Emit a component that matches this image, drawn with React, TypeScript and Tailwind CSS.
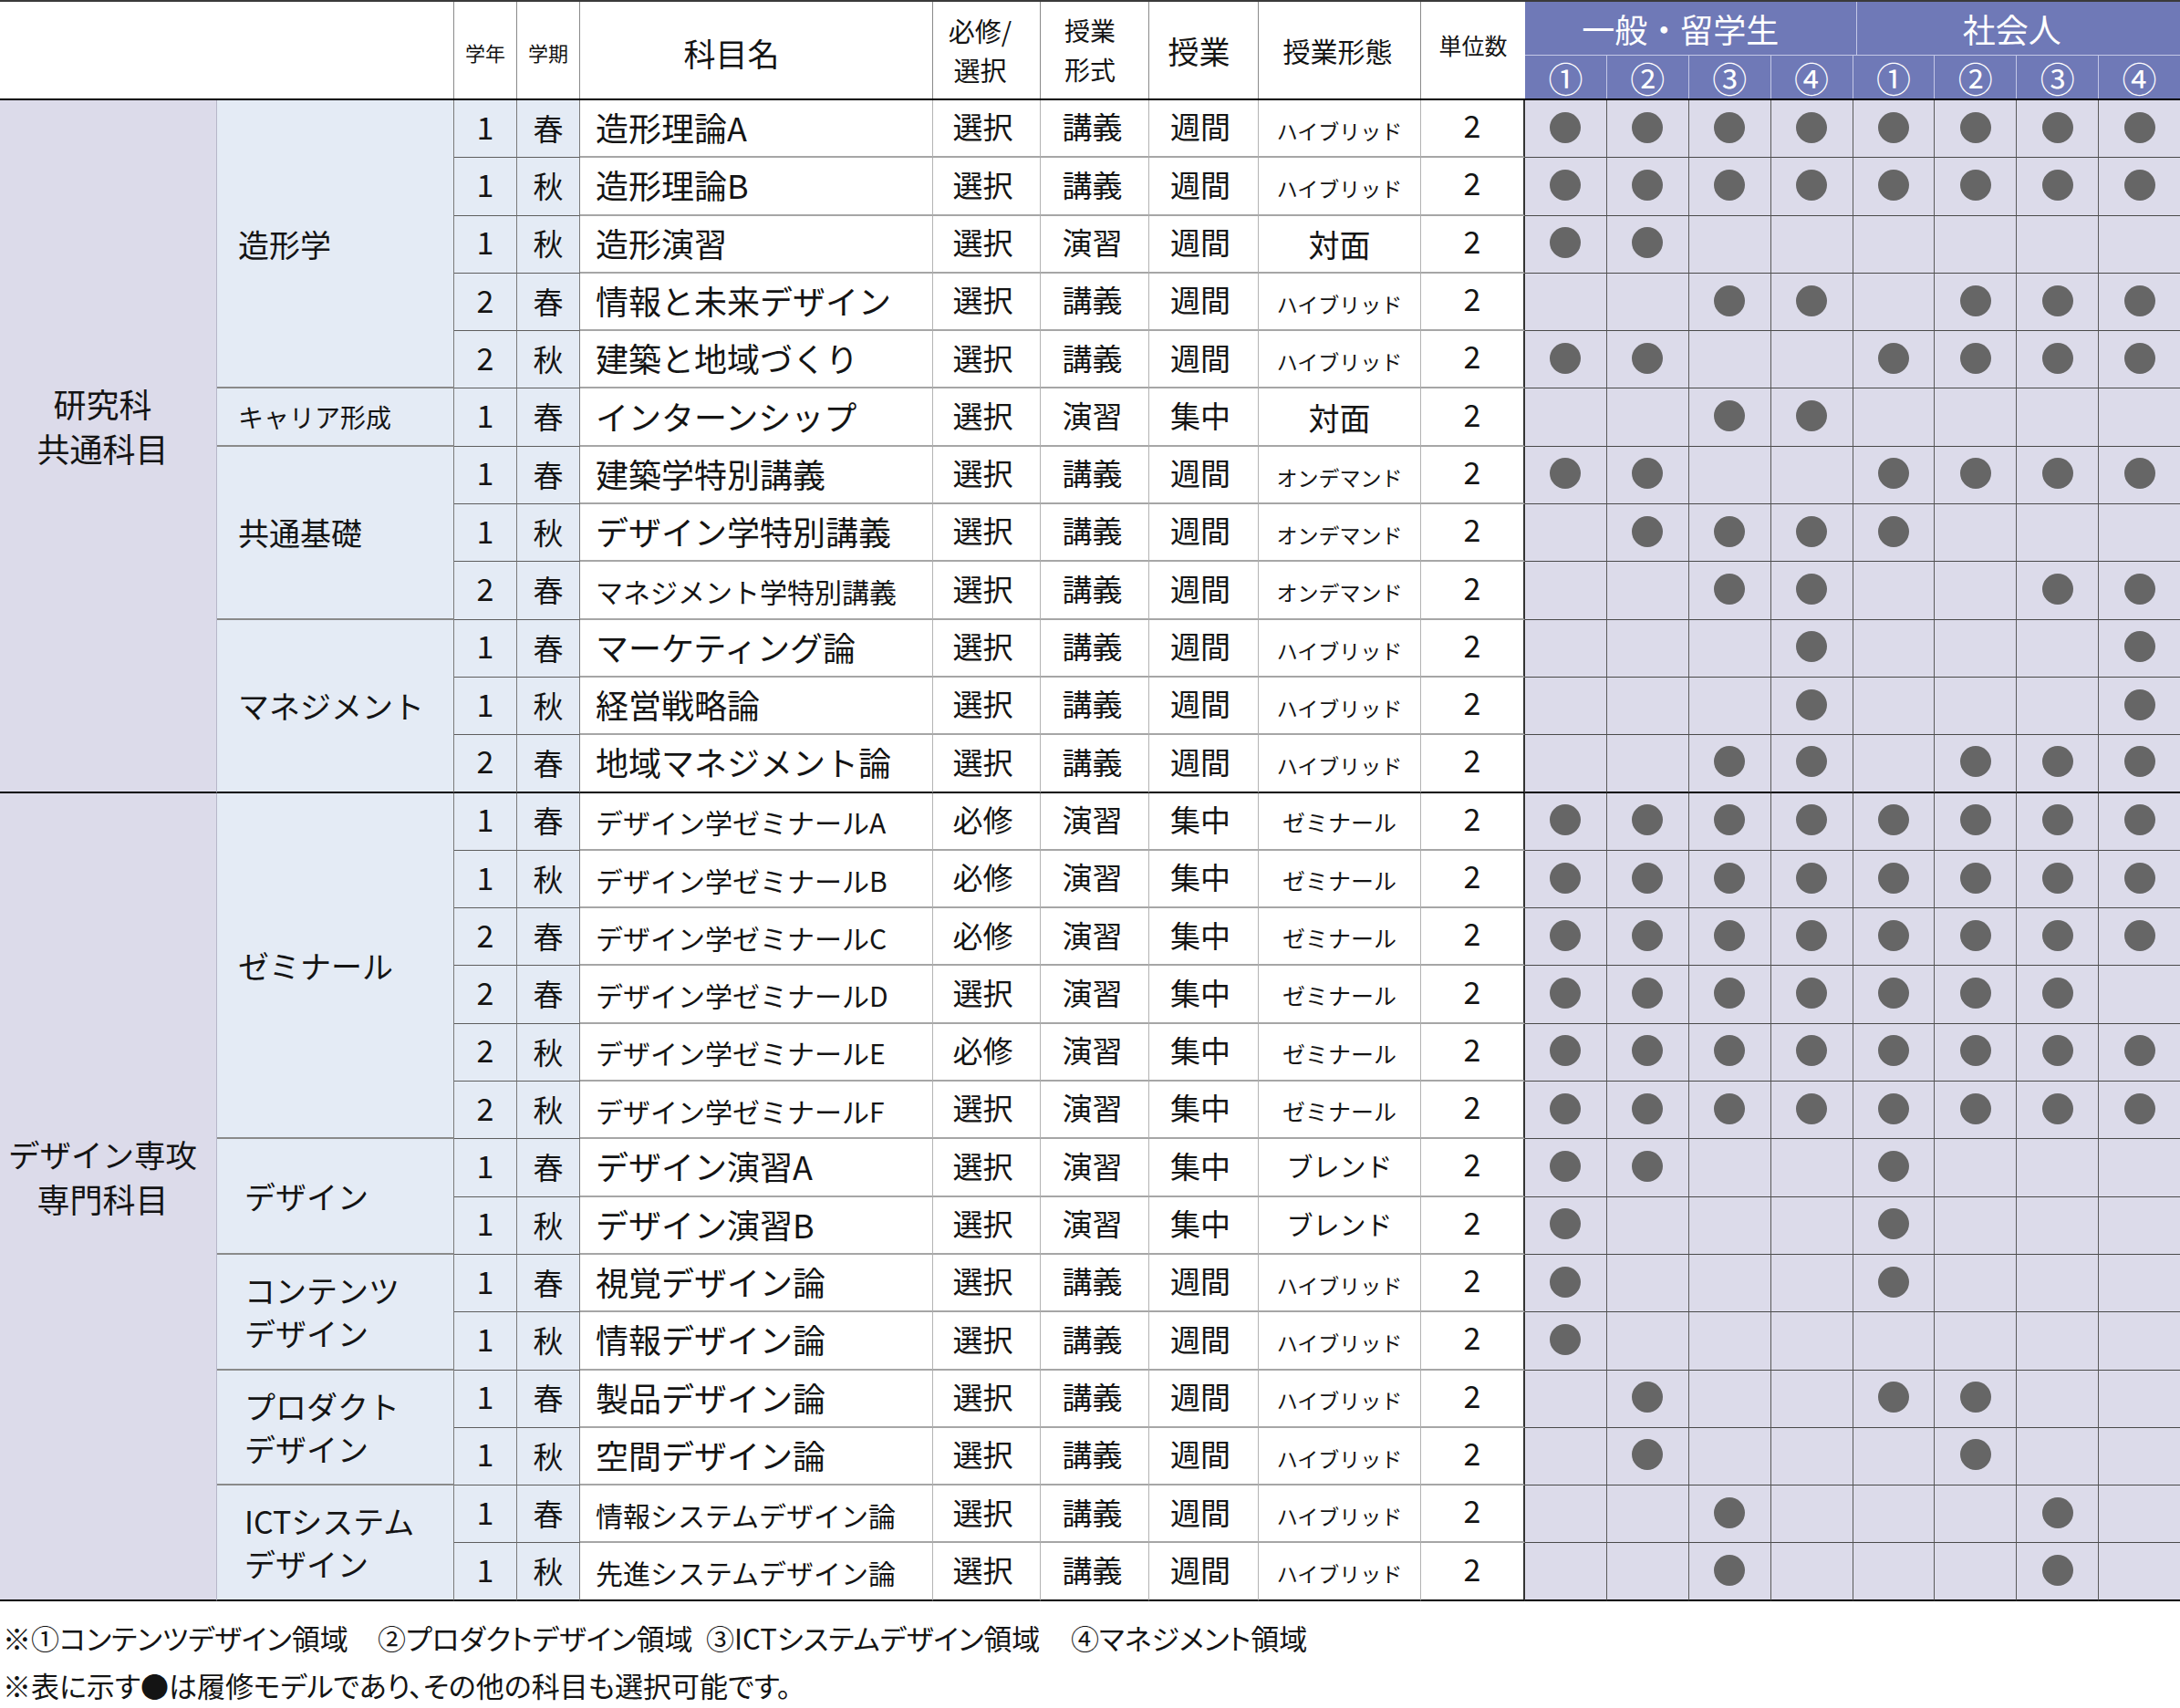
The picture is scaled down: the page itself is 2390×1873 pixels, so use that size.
type Row = {
  y: string
  t: string
  name: string
  small?: boolean
  req: string
  kind: string
  sched: string
  mode: string
  dots: string
}

type Group = { label: string[]; small?: boolean; wide?: boolean; rows: Row[] }
type Section = { label: string[]; groups: Group[] }

const r = (
  y: string,
  t: string,
  name: string,
  req: string,
  kind: string,
  sched: string,
  mode: string,
  dots: string,
  small = false,
): Row => ({ y, t, name, req, kind, sched, mode, dots, small })

const sections: Section[] = [
  {
    label: ['研究科', '共通科目'],
    groups: [
      {
        label: ['造形学'],
        rows: [
          r('1', '春', '造形理論A', '選択', '講義', '週間', 'ハイブリッド', '11111111'),
          r('1', '秋', '造形理論B', '選択', '講義', '週間', 'ハイブリッド', '11111111'),
          r('1', '秋', '造形演習', '選択', '演習', '週間', '対面', '11000000'),
          r('2', '春', '情報と未来デザイン', '選択', '講義', '週間', 'ハイブリッド', '00110111'),
          r('2', '秋', '建築と地域づくり', '選択', '講義', '週間', 'ハイブリッド', '11001111'),
        ],
      },
      {
        label: ['キャリア形成'],
        small: true,
        rows: [r('1', '春', 'インターンシップ', '選択', '演習', '集中', '対面', '00110000')],
      },
      {
        label: ['共通基礎'],
        rows: [
          r('1', '春', '建築学特別講義', '選択', '講義', '週間', 'オンデマンド', '11001111'),
          r('1', '秋', 'デザイン学特別講義', '選択', '講義', '週間', 'オンデマンド', '01111000'),
          r('2', '春', 'マネジメント学特別講義', '選択', '講義', '週間', 'オンデマンド', '00110011', true),
        ],
      },
      {
        label: ['マネジメント'],
        rows: [
          r('1', '春', 'マーケティング論', '選択', '講義', '週間', 'ハイブリッド', '00010001'),
          r('1', '秋', '経営戦略論', '選択', '講義', '週間', 'ハイブリッド', '00010001'),
          r('2', '春', '地域マネジメント論', '選択', '講義', '週間', 'ハイブリッド', '00110111'),
        ],
      },
    ],
  },
  {
    label: ['デザイン専攻', '専門科目'],
    groups: [
      {
        label: ['ゼミナール'],
        rows: [
          r('1', '春', 'デザイン学ゼミナールA', '必修', '演習', '集中', 'ゼミナール', '11111111', true),
          r('1', '秋', 'デザイン学ゼミナールB', '必修', '演習', '集中', 'ゼミナール', '11111111', true),
          r('2', '春', 'デザイン学ゼミナールC', '必修', '演習', '集中', 'ゼミナール', '11111111', true),
          r('2', '春', 'デザイン学ゼミナールD', '選択', '演習', '集中', 'ゼミナール', '11111110', true),
          r('2', '秋', 'デザイン学ゼミナールE', '必修', '演習', '集中', 'ゼミナール', '11111111', true),
          r('2', '秋', 'デザイン学ゼミナールF', '選択', '演習', '集中', 'ゼミナール', '11111111', true),
        ],
      },
      {
        label: ['デザイン'],
        wide: true,
        rows: [
          r('1', '春', 'デザイン演習A', '選択', '演習', '集中', 'ブレンド', '11001000'),
          r('1', '秋', 'デザイン演習B', '選択', '演習', '集中', 'ブレンド', '10001000'),
        ],
      },
      {
        label: ['コンテンツ', 'デザイン'],
        wide: true,
        rows: [
          r('1', '春', '視覚デザイン論', '選択', '講義', '週間', 'ハイブリッド', '10001000'),
          r('1', '秋', '情報デザイン論', '選択', '講義', '週間', 'ハイブリッド', '10000000'),
        ],
      },
      {
        label: ['プロダクト', 'デザイン'],
        wide: true,
        rows: [
          r('1', '春', '製品デザイン論', '選択', '講義', '週間', 'ハイブリッド', '01001100'),
          r('1', '秋', '空間デザイン論', '選択', '講義', '週間', 'ハイブリッド', '01000100'),
        ],
      },
      {
        label: ['ICTシステム', 'デザイン'],
        wide: true,
        rows: [
          r('1', '春', '情報システムデザイン論', '選択', '講義', '週間', 'ハイブリッド', '00100010', true),
          r('1', '秋', '先進システムデザイン論', '選択', '講義', '週間', 'ハイブリッド', '00100010', true),
        ],
      },
    ],
  },
]

const modeClass: Record<string, string> = {
  ハイブリッド: 'text-[23px] pt-[5px]',
  オンデマンド: 'text-[23px] pt-[5px]',
  対面: 'text-[34px]',
  ゼミナール: 'text-[25px] pt-[4px]',
  ブレンド: 'text-[29px] pb-[2px]',
}

function DataRow({ row, end }: { row: Row; end: boolean }) {
  // bottom lines: section end is a black rule across everything
  const white = end ? 'border-b-2 border-b-black' : 'border-b-2 border-b-[#a6a6a6]'
  const blue = end ? 'border-b-2 border-b-black' : 'border-b border-b-[#5e5e5e]'
  const dot = end ? 'border-b-2 border-b-black' : 'border-b border-b-[#4a4a4a]'
  return (
    <div className="flex h-[63.3px]">
      <div className={`flex w-[69px] items-center justify-center border-r border-r-[#7a7a7a] bg-[#e4ebf5] pb-[6px] text-[34px] ${blue}`}>{row.y}</div>
      <div className={`flex w-[69px] items-center justify-center border-r border-r-[#7a7a7a] bg-[#e4ebf5] pb-[1px] text-[33px] ${blue}`}>{row.t}</div>
      <div className={`flex w-[387px] items-center border-r border-r-[#b3b3b3] pl-[17px] ${row.small ? 'pt-[3px] text-[30px]' : 'pb-[3px] text-[36px]'} ${white}`}>
        {row.name}
      </div>
      <div className={`flex w-[118px] items-center justify-center border-r border-r-[#b3b3b3] pb-[3px] pr-[8px] text-[33px] ${white}`}>{row.req}</div>
      <div className={`flex w-[119px] items-center justify-center border-r border-r-[#b3b3b3] pb-[3px] pr-[5px] text-[33px] ${white}`}>{row.kind}</div>
      <div className={`flex w-[120px] items-center justify-center border-r border-r-[#b3b3b3] pb-[3px] pr-[7px] text-[33px] ${white}`}>{row.sched}</div>
      <div className={`flex w-[178px] items-center justify-center border-r border-r-[#b3b3b3] ${modeClass[row.mode]} ${white}`}>{row.mode}</div>
      <div className={`flex w-[114px] items-center justify-center border-r-2 border-r-[#333] pb-[8px] text-[34px] ${white}`}>2</div>
      <div className="flex flex-1">
        {row.dots.split('').map((d, i) => (
          <div
            key={i}
            className={`flex flex-1 items-center justify-center bg-[#dcdbea] pb-[3px] ${i < 7 ? 'border-r border-r-[#5a5a5a]' : ''} ${dot}`}
          >
            {d === '1' && <span className="block h-[34px] w-[34px] rounded-full bg-[#666666]" />}
          </div>
        ))}
      </div>
    </div>
  )
}

function Header() {
  const circ = ['①', '②', '③', '④', '①', '②', '③', '④']
  return (
    <div className="flex h-[110px] border-t-2 border-b-2 border-t-[#3a3a3a] border-b-black">
      <div className="w-[498px] border-r border-r-[#8a8a8a]" />
      <div className="flex w-[69px] items-center justify-center border-r border-r-[#8a8a8a] pt-[4px] text-[22px]">学年</div>
      <div className="flex w-[69px] items-center justify-center border-r border-r-[#8a8a8a] pt-[4px] text-[22px]">学期</div>
      <div className="flex w-[387px] items-center justify-center border-r border-r-[#8a8a8a] pr-[54px] pt-[6px] text-[35px]">科目名</div>
      <div className="flex w-[118px] flex-col items-center justify-center border-r border-r-[#8a8a8a] pr-[14px] text-[29px] leading-[43px]">
        <span>必修/</span>
        <span>選択</span>
      </div>
      <div className="flex w-[119px] flex-col items-center justify-center border-r border-r-[#8a8a8a] pr-[10px] text-[28px] leading-[43px]">
        <span>授業</span>
        <span>形式</span>
      </div>
      <div className="flex w-[120px] items-center justify-center border-r border-r-[#8a8a8a] pr-[10px] text-[34px]">授業</div>
      <div className="flex w-[178px] items-center justify-center border-r border-r-[#8a8a8a] pr-[4px] text-[30px]">授業形態</div>
      <div className="flex w-[114px] items-center justify-center pb-[10px] text-[25px]">単位数</div>
      <div className="flex flex-1 flex-col bg-[#6f79b7] text-white">
        <div className="flex h-[59px] border-b border-b-[#c3c7e6]">
          <div className="flex flex-1 items-center justify-center border-r border-r-[#c3c7e6] pr-[22px] text-[36px]">一般・留学生</div>
          <div className="flex flex-1 items-center justify-center pr-[14px] text-[36px]">社会人</div>
        </div>
        <div className="flex flex-1">
          {circ.map((c, i) => (
            <div
              key={i}
              className={`flex flex-1 items-center justify-center text-[38px] leading-none ${i < 7 ? 'border-r border-r-[#c3c7e6]' : ''}`}
            >
              {c}
            </div>
          ))}
        </div>
      </div>
    </div>
  )
}

export default function App() {
  return (
    <div
      className="w-[2390px] bg-white text-[#141414]"
      style={{ fontFamily: '"Noto Sans CJK JP", "Noto Sans", sans-serif' }}
    >
      <Header />

      {sections.map((s, si) => (
        <div key={si} className="flex">
          {/* Category column */}
          <div className="flex w-[238px] flex-col items-center justify-center border-r border-r-[#b7b7c9] border-b-2 border-b-black bg-[#dcdbea] pb-[44px] pr-[12px] text-[36px] leading-[49px]">
            {s.label.map((l) => (
              <span key={l} className={l.length > 5 ? 'text-[34.5px]' : ''}>
                {l}
              </span>
            ))}
          </div>

          <div className="flex flex-1 flex-col">
            {s.groups.map((g, gi) => {
              const lastGroup = gi === s.groups.length - 1
              return (
                <div key={gi} className="flex">
                  {/* Sub category */}
                  <div
                    className={`flex w-[260px] flex-col justify-center border-r border-r-[#7a7a7a] bg-[#e4ebf5] leading-[47px] ${
                      g.wide ? 'pl-[30px]' : 'pl-[23px]'
                    } ${g.small ? 'text-[28px]' : 'text-[34px]'} ${
                      lastGroup ? 'border-b-2 border-b-black' : 'border-b-2 border-b-[#8a8a8a]'
                    }`}
                  >
                    {g.label.map((l) => (
                      <span key={l}>{l}</span>
                    ))}
                  </div>
                  <div className="flex flex-1 flex-col">
                    {g.rows.map((row, ri) => (
                      <DataRow key={ri} row={row} end={lastGroup && ri === g.rows.length - 1} />
                    ))}
                  </div>
                </div>
              )
            })}
          </div>
        </div>
      ))}

      {/* Notes */}
      <div className="pl-[3px] pt-[14px] text-[31px] leading-[52px] [font-feature-settings:'palt']">
        <div className="flex whitespace-nowrap">
          <span className="w-[411px]">※①コンテンツデザイン領域</span>
          <span className="w-[360px]">②プロダクトデザイン領域</span>
          <span className="w-[400px]">③ICTシステムデザイン領域</span>
          <span>④マネジメント領域</span>
        </div>
        <div className="whitespace-nowrap">※表に示す●は履修モデルであり、その他の科目も選択可能です。</div>
      </div>
    </div>
  )
}
